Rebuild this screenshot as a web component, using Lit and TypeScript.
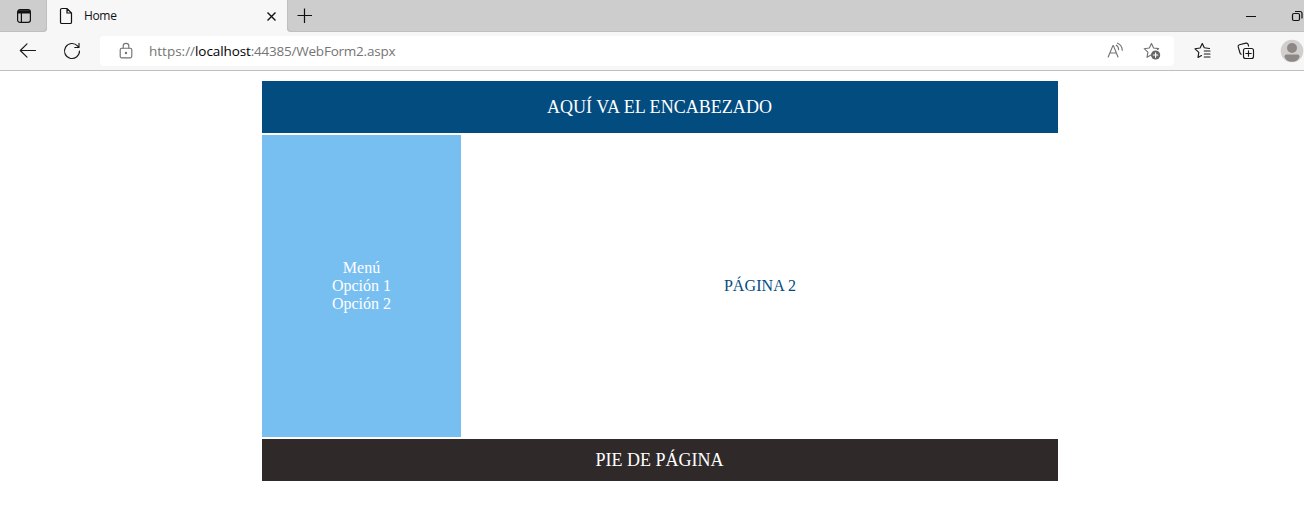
import { LitElement, html, css, svg } from "lit";
import { customElement } from "lit/decorators.js";

const star = svg`<path d="M8.5 1.5 L10.6 6 L15.5 6.6 M8.5 1.5 L6.3 6 L1.2 6.7 L4.9 10.2 L4 15.3 L8 13.1"/>`;

@customElement("browser-tabs")
class BrowserTabs extends LitElement {
  static styles = css`
    :host { display: flex; height: 32px; background: #f7f7f7; }
    svg { display: block; fill: none; stroke: #111; stroke-width: 1.2; flex: none; }
    .workspace { width: 47px; height: 32px; box-sizing: border-box; padding: 8px 0 0 16px; border-bottom-right-radius: 4px; background: #cdcdcd; box-shadow: inset -1px -1px #bfbfbf; }
    .tab { width: 240px; height: 32px; box-sizing: border-box; display: flex; padding-left: 12px; }
    .page { margin-top: 7px; }
    .title { font: 12px/16px "Open Sans", "Noto Sans", sans-serif; color: #111; margin: 8px 0 0 11px; flex: 1; letter-spacing: -0.35px; }
    .close { margin: 11px 10px 0 0; }
    .rest { flex: 1; display: flex; background: #cdcdcd; border-bottom-left-radius: 4px; box-shadow: inset 1px -1px #bfbfbf; min-width: 0; }
    .plus { margin: 8px 0 0 10px; }
    .spacer { flex: 1; }
    .min { margin: 15px 34px 0 0; }
    .restore { margin-top: 10px; }
  `;
  render() {
    return html`
      <div class="workspace"><svg width="16" height="16" viewBox="0 0 16 16"><rect x="1.6" y="1.6" width="12.8" height="12.8" rx="2.4"/><path d="M2 3.2H14M2 4.6H14" stroke-width="2"/><path d="M5.4 5V14"/></svg></div>
      <div class="tab">
        <svg class="page" width="14" height="18" viewBox="0 0 14 18"><path d="M3 1.5H8L12.5 6V15.2Q12.5 16.5 11.2 16.5H2.8Q1.5 16.5 1.5 15.2V2.8Q1.5 1.5 3 1.5ZM8 1.5V6H12.5"/></svg>
        <span class="title">Home</span>
        <svg class="close" width="11" height="11" viewBox="0 0 11 11"><path d="M1.5 1.5L9.5 9.5M9.5 1.5L1.5 9.5" stroke-width="1.4"/></svg>
      </div>
      <div class="rest">
        <svg class="plus" width="16" height="16" viewBox="0 0 16 16"><path d="M.5 7.5H15M7.5 .5V15"/></svg>
        <div class="spacer"></div>
        <svg class="min" width="11" height="2"><path d="M0 1.5H10" stroke-width="1"/></svg>
        <svg class="restore" width="13" height="13" viewBox="0 0 13 13"><rect x="1.5" y="3.5" width="7" height="7" rx="1.5"/><path d="M4 1.5H9Q11 1.5 11 3.5V8.5"/></svg>
      </div>
    `;
  }
}

@customElement("browser-toolbar")
class BrowserToolbar extends LitElement {
  static styles = css`
    :host { display: flex; align-items: center; box-sizing: border-box; height: 39px; background: #f7f7f7; border-bottom: 1px solid #bfbfbf; overflow: hidden; }
    svg { display: block; fill: none; stroke: #191919; stroke-width: 1.15; stroke-linecap: round; stroke-linejoin: round; flex: none; }
    .back { margin-left: 19px; }
    .reload { margin-left: 26px; }
    .address { flex: none; margin-left: 19px; width: 1074px; height: 30px; display: flex; align-items: center; background: #fff; border-radius: 4px; box-sizing: border-box; padding: 0 13px 0 19px; }
    .address svg { stroke: #737373; }
    .url { flex: 1; margin-left: 16px; color: #757575; font: 13.5px/20px "Open Sans", "Noto Sans", sans-serif; white-space: nowrap; }
    .host { color: #000; letter-spacing: -0.1px; }
    .path { letter-spacing: -0.22px; }
    .follow { margin-left: 19px; }
    .fav { margin-left: 20px; }
    .coll { margin-left: 26px; }
    .user { margin-left: 25px; }
    .solid { fill: #666; stroke: none; }
    .disc { fill: #d1cfcc; stroke: none; }
    .person { fill: #8d8885; stroke: none; }
    .address .knock { stroke: #fff; }
  `;
  render() {
    return html`
      <svg class="back" width="18" height="18" viewBox="0 0 18 18"><path d="M16.5 8.5H1.5M8 1.8L1.3 8.5L8 15.2"/></svg>
      <svg class="reload" width="18" height="18" viewBox="0 0 18 18"><path d="M16.5 9A7.5 7.5 0 1 1 14.5 3.9L15.8 5.5M16 1.3V5.5H11.8"/></svg>
      <div class="address">
        <svg width="14" height="18" viewBox="0 0 14 18"><rect x="1.2" y="6.2" width="11.6" height="9.6" rx="1.5"/><path d="M4.2 6V3.8Q4.2 1.3 7 1.3T9.8 3.8V6"/><circle cx="7" cy="11" r=".6"/></svg>
        <span class="url">https://<span class="host">localhost</span><span class="path">:44385/WebForm2.aspx</span></span>
        <svg width="17" height="18" viewBox="0 0 17 18"><path d="M1.2 15L5.9 3.6H6.4L11 15M2.9 11H9.4M9.2 3.2Q11.6 4.4 11.6 7.6M10.5 1.2Q15.2 3 15.2 8.3"/></svg>
        <svg class="follow" width="18" height="18" viewBox="0 0 18 18">${star}<path d="M15.5 6.6L14.5 7.5"/><circle class="solid" cx="12.6" cy="13" r="4.6"/><path class="knock" d="M10.3 13H14.9M12.6 10.7V15.3"/></svg>
      </div>
      <svg class="fav" width="17" height="18" viewBox="0 0 17 18"><path d="M8.3 1.5L10.3 5.8L15.5 6.5M8.3 1.5L6.1 6L1 6.8L4.8 10.3L4 15.4L7.5 13.5M10.3 9H16M10.3 12H16M10.3 15H16"/></svg>
      <svg class="coll" width="18" height="18" viewBox="0 0 18 18"><rect x="6.5" y="6.5" width="10" height="10" rx="2"/><path d="M11.5 8.8V14.2M8.8 11.5H14.2M4.2 12.3Q3.3 12 3 11L1.2 4.9Q.8 3.3 2.4 2.8L9 1.1Q10.6 .8 11.1 2.3L11.6 4.2"/></svg>
      <svg class="user" width="24" height="24" viewBox="0 0 24 24"><circle class="disc" cx="12" cy="12" r="11.3"/><circle class="person" cx="12" cy="9" r="5"/><path class="person" d="M4.5 17.4Q4.5 15.4 6.5 15.4H17.5Q19.5 15.4 19.5 17.4Q18 22.8 12 22.8T4.5 17.4Z"/></svg>
    `;
  }
}

@customElement("app-root")
class AppRoot extends LitElement {
  static styles = css`
    :host { display: block; width: 100%; height: 511px; overflow: hidden; background: #fff; }
    .layout { width: 796px; margin: 10px auto 0 262px; display: grid; grid-template-columns: 199px 1fr; grid-template-rows: 52px 302px 42px; row-gap: 2px; font: 16px/18px "Liberation Serif", serif; text-align: center; }
    .layout > * { display: flex; align-items: center; justify-content: center; box-sizing: border-box; }
    .header, .footer { grid-column: 1 / -1; color: #fff; font-size: 18px; padding-right: 1px; }
    .header { background: #034c80; letter-spacing: 0.04px; }
    .footer { background: #302929; }
    .menu { background: #77bef1; color: #fff; }
    .content { color: #034c80; padding-left: 1px; letter-spacing: 0.08px; }
  `;
  render() {
    return html`
      <browser-tabs></browser-tabs>
      <browser-toolbar></browser-toolbar>
      <main class="layout">
        <header class="header"><span>AQUÍ VA EL ENCABEZADO</span></header>
        <nav class="menu"><div><div>Menú</div><div>Opción 1</div><div>Opción 2</div></div></nav>
        <section class="content"><span>PÁGINA 2</span></section>
        <footer class="footer"><span>PIE DE PÁGINA</span></footer>
      </main>
    `;
  }
}
